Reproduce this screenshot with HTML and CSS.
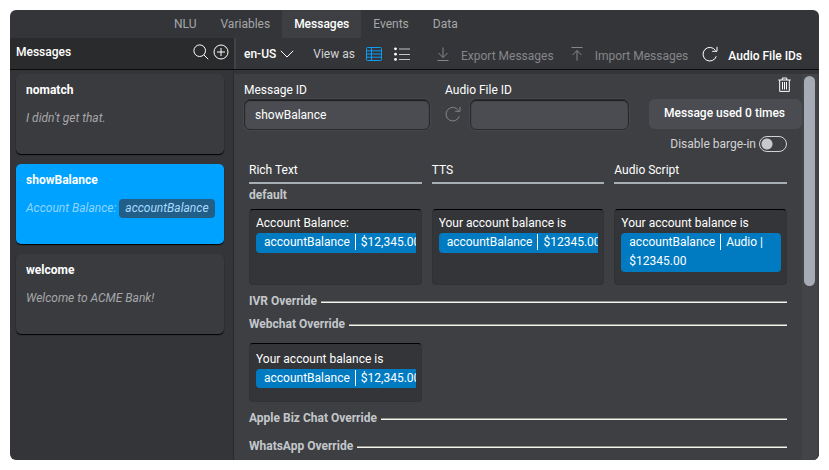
FILE: index.html
```html
<!DOCTYPE html>
<html lang="en">
<head>
<meta charset="utf-8">
<title>Messages</title>
<link rel="stylesheet" href="styles.css">
</head>
<body>
<div class="app">
  <nav class="tabs">
    <a class="tab" href="#nlu">NLU</a>
    <a class="tab" href="#variables">Variables</a>
    <a class="tab tab-active" href="#messages" aria-current="page">Messages</a>
    <a class="tab" href="#events">Events</a>
    <a class="tab" href="#data">Data</a>
  </nav>
  <header class="bar">
    <div class="bar-side">
      <h1 class="bar-title">Messages</h1>
      <button class="icon-button" type="button" aria-label="Search">
        <svg width="16" height="16" viewBox="0 0 16 16"><circle cx="6.7" cy="6.7" r="5.8"/><path d="M10.9 10.9L15.2 15.2"/></svg>
      </button>
      <button class="icon-button" type="button" aria-label="Add message">
        <svg width="16" height="16" viewBox="0 0 16 16"><circle cx="8" cy="8" r="7"/><path d="M8 4v8M4 8h8"/></svg>
      </button>
    </div>
    <div class="bar-main">
      <button class="tool tool-strong tool-lang" type="button">en-US
        <svg width="14" height="8" viewBox="0 0 14 8"><path d="M.8 .8L7 7L13.2 .8"/></svg>
      </button>
      <span class="view-label">View as</span>
      <button class="icon-button view-table" type="button" aria-label="Table view">
        <svg width="16" height="14" viewBox="0 0 16 14"><rect x=".5" y=".5" width="15" height="13" rx="1"/><path d="M5.5 .5v13M.5 3.8h15M.5 7h15M.5 10.2h15"/></svg>
      </button>
      <button class="icon-button view-list" type="button" aria-label="List view">
        <svg width="16" height="14" viewBox="0 0 16 14"><path d="M5 2h11M5 7.5h11M5 12.5h11"/><g class="dots"><circle cx="1.5" cy="1.8" r="1.4"/><circle cx="1.5" cy="7.2" r="1.4"/><circle cx="1.5" cy="12.4" r="1.4"/></g></svg>
      </button>
      <button class="tool tool-export" type="button">
        <svg width="12" height="14" viewBox="0 0 12 14"><path d="M6 .5v10M1.5 6L6 10.5L10.5 6M.5 13.5h11"/></svg>
        <span class="tool-text">Export Messages</span>
      </button>
      <button class="tool tool-import" type="button">
        <svg width="12" height="14" viewBox="0 0 12 14"><path d="M.5 .5h11M6 13.5V3.5M1.5 8L6 3.5L10.5 8"/></svg>
        <span class="tool-text">Import Messages</span>
      </button>
      <button class="tool tool-strong tool-audio" type="button">
        <svg width="16" height="16" viewBox="0 0 16 16"><path d="M14.3 10.3A6.8 6.8 0 1 1 13.6 4.6M15 .8V5.3H10.2"/></svg>
        <span class="tool-text">Audio File IDs</span>
      </button>
    </div>
  </header>
  <div class="body">
    <aside class="list">
      <article class="card">
        <h2 class="card-name">nomatch</h2>
        <p class="card-text">I didn't get that.</p>
      </article>
      <article class="card card-selected">
        <h2 class="card-name">showBalance</h2>
        <p class="card-text">Account Balance: <span class="card-chip">accountBalance</span></p>
      </article>
      <article class="card">
        <h2 class="card-name">welcome</h2>
        <p class="card-text">Welcome to ACME Bank!</p>
      </article>
    </aside>
    <main class="detail">
      <div class="content">
        <div class="form">
          <div class="field field-id">
            <label for="message-id">Message ID</label>
            <input id="message-id" class="input" type="text" value="showBalance">
          </div>
          <div class="field field-audio">
            <label for="audio-id">Audio File ID</label>
            <div class="audio-row">
              <button class="icon-button refresh" type="button" aria-label="Refresh audio file ID">
                <svg width="16" height="16" viewBox="0 0 16 16"><path d="M14.3 10.3A6.8 6.8 0 1 1 13.6 4.6M15 .8V5.3H10.2"/></svg>
              </button>
              <input id="audio-id" class="input" type="text">
            </div>
          </div>
          <div class="actions">
            <button class="icon-button trash" type="button" aria-label="Delete message">
              <svg width="13" height="16" viewBox="0 0 13 16"><path d="M.3 3h12.4M4.3 3V1h4.4v2M1.7 3v11.4h9.6V3M4.5 5v7.5M6.5 5v7.5M8.5 5v7.5"/></svg>
            </button>
            <button class="used" type="button">Message used 0 times</button>
            <label class="barge">Disable barge-in <input class="switch" type="checkbox"></label>
          </div>
        </div>
        <section class="variants">
          <div class="columns heads">
            <h3 class="head">Rich Text</h3>
            <h3 class="head">TTS</h3>
            <h3 class="head">Audio Script</h3>
          </div>
          <h4 class="group-name">default</h4>
          <div class="columns boxes">
            <div class="box"><div class="clip">Account Balance:<div class="chip"><span>accountBalance</span><span class="value">$12,345.00</span></div></div></div>
            <div class="box"><div class="clip">Your account balance is<div class="chip"><span>accountBalance</span><span class="value">$12345.00</span></div></div></div>
            <div class="box"><div class="clip">Your account balance is<div class="chip chip-wrap"><span>accountBalance</span><span class="value">Audio |</span><br>$12345.00</div></div></div>
          </div>
          <h4 class="group-name ruled">IVR Override</h4>
          <h4 class="group-name ruled">Webchat Override</h4>
          <div class="columns boxes boxes-short">
            <div class="box"><div class="clip">Your account balance is<div class="chip"><span>accountBalance</span><span class="value">$12,345.00</span></div></div></div>
          </div>
          <h4 class="group-name ruled">Apple Biz Chat Override</h4>
          <h4 class="group-name ruled ruled-last">WhatsApp Override</h4>
        </section>
      </div>
      <div class="scroll"><div class="thumb"></div></div>
    </main>
  </div>
</div>
</body>
</html>
```
FILE: styles.css
```css
* {
  box-sizing: border-box;
}

body {
  margin: 0;
  padding: 10px;
  background: #fff;
  color: #fff;
  font: 12px/16px Roboto, sans-serif;
}

h1, h2, h3, h4, p {
  margin: 0;
  font-size: 12px;
}

button, input {
  margin: 0;
  padding: 0;
  border: 0;
  background: none;
  color: inherit;
  font: inherit;
}

svg {
  display: block;
  flex: none;
  fill: none;
  stroke: currentColor;
}

.app {
  display: flex;
  flex-direction: column;
  min-height: calc(100vh - 20px);
  overflow: hidden;
  border-radius: 6px;
  background: #343538;
}

/* Tabs */
.tabs {
  display: flex;
  padding-left: 152px;
}

.tab {
  padding: 6px 12px;
  color: #a6a7aa;
  text-decoration: none;
}

.tab-active {
  background: #3e3f43;
  color: #fff;
  font-weight: 500;
}

/* Toolbar */
.bar {
  display: flex;
  border-bottom: 1px solid #0c0c0d;
}

.bar-side {
  display: flex;
  align-items: center;
  gap: 4px;
  width: 224px;
  height: 31px;
  padding: 0 5px 3px 6px;
  background: #2a2b2d;
}

.bar-title {
  flex: 1;
  font-weight: 500;
}

.icon-button {
  flex: none;
}

.bar-main {
  display: flex;
  flex: 1;
  align-items: center;
  padding-left: 8px;
  border-left: 2px solid #424347;
  white-space: nowrap;
}

.tool {
  display: flex;
  align-items: center;
  gap: 12px;
  color: #85868a;
}

.tool-strong {
  color: #fff;
  font-weight: 500;
}

.tool-text {
  padding-top: 4px;
}

.tool-lang {
  gap: 4px;
}

.view-label {
  margin-left: 19px;
  color: #d2d3d5;
}

.view-table {
  margin-left: 11px;
  color: #0c9cf5;
}

.view-list {
  margin-left: 12px;
  color: #c4c5c8;
}

.dots {
  fill: #fff;
  stroke: none;
}

.tool-export {
  margin-left: 27px;
}

.tool-import {
  margin-left: 17px;
}

.tool-audio {
  margin-left: 14px;
  gap: 10px;
}

/* Message list */
.body {
  display: flex;
  flex: 1;
}

.list {
  display: flex;
  flex-direction: column;
  gap: 10px;
  width: 224px;
  padding: 4px 9px 10px 6px;
  border-right: 1px solid #2a2b2d;
}

.card {
  min-height: 80px;
  padding: 8px 9px 8px 10px;
  border-radius: 5px;
  background: #3a3b3e;
  box-shadow: 0 1px 1px #000;
}

.card-name {
  font-weight: 700;
}

.card-text {
  margin-top: 12px;
  color: #a6a7aa;
  font-style: italic;
  white-space: nowrap;
}

.card-selected {
  background: #00a2ff;
}

.card-selected .card-text {
  color: #8fd4ff;
}

.card-chip {
  padding: 2px 6px 3px 6px;
  border-radius: 4px;
  background: #215e88;
  color: #a8dcff;
}

/* Message detail */
.detail {
  display: flex;
  flex: 1;
  min-width: 0;
  margin-top: 4px;
  padding-right: 2px;
  background: #3e3f43;
}

.content {
  flex: 1;
  min-width: 0;
  padding-left: 10px;
}

.form {
  display: flex;
  align-items: flex-start;
}

.field {
  padding-top: 8px;
}

.field label {
  display: block;
}

.field-id {
  flex: 186;
  margin-right: 15px;
}

.field-audio {
  flex: 184;
  margin-right: 20px;
}

.audio-row {
  display: flex;
  align-items: center;
  gap: 9px;
}

.refresh {
  color: #85868a;
}

.input {
  width: 100%;
  min-width: 0;
  height: 31px;
  margin-top: 1px;
  padding: 1px 10px 0;
  border: 1px solid #28292b;
  border-radius: 6px;
  background: #4a4c51;
  box-shadow: inset 0 1px 1px #1c1d1f, 0 0 0 1px #46474b;
}

.actions {
  display: flex;
  flex-direction: column;
  align-items: flex-end;
}

.trash {
  margin: 3px 11px 6px 0;
}

.used {
  height: 30px;
  padding: 0 17px 2px 15px;
  border-radius: 6px;
  background: #4a4c51;
  font-weight: 500;
  white-space: nowrap;
}

.barge {
  display: flex;
  align-items: center;
  gap: 3px;
  margin: 7px 15px 0 0;
  color: #d2d3d5;
}

.switch {
  width: 28px;
  height: 16px;
  appearance: none;
  border: 1px solid #d2d3d5;
  border-radius: 8px;
  background: radial-gradient(circle at 7px 7px, #c8c9cc 5px, transparent 6px);
}

.variants {
  padding: 10px 15px 6px 5px;
}

.columns {
  display: grid;
  grid-template-columns: repeat(3, minmax(0, 1fr));
  gap: 10px;
}

.head {
  padding-bottom: 4px;
  border-bottom: 2px solid #a7afb4;
  font-weight: 400;
}

.group-name {
  display: flex;
  align-items: center;
  gap: 4px;
  color: #c3c7ca;
  font-weight: 700;
}

.heads + .group-name {
  margin-top: 3px;
}

.boxes {
  margin-top: 6px;
}

.box {
  min-height: 76px;
  padding: 5px 5px 5px 6px;
  border: 1px solid #313235;
  border-top-color: #000;
  border-radius: 4px;
  background: #343538;
}

.boxes-short {
  margin-top: 11px;
}

.boxes-short .box {
  min-height: 59px;
  padding-top: 7px;
}

.boxes-short .chip {
  height: 19px;
}

.clip {
  overflow: hidden;
  white-space: nowrap;
}

.chip {
  width: max-content;
  height: 20px;
  margin-top: 2px;
  padding: 0 8px;
  border-radius: 4px;
  background: #007bc2;
  line-height: 19px;
}

.chip-wrap {
  width: auto;
  height: auto;
  padding-bottom: 1px;
}

.value {
  margin-left: 5px;
  padding: 1px 0 1px 5px;
  border-left: 1px solid #fff;
}

.ruled {
  margin-top: 7px;
}

.boxes + .ruled {
  margin-top: 8px;
}

.ruled::after {
  content: "";
  flex: 1;
  height: 1px;
  margin-top: 2px;
  border-top: 1px solid #96968f;
  background: #f4f4f0;
}

.ruled-last {
  margin-top: 12px;
}

.scroll {
  width: 15px;
  padding: 2px;
  background: #434448;
}

.thumb {
  height: 55%;
  border-radius: 6px;
  background: #a6abb5;
}
```
